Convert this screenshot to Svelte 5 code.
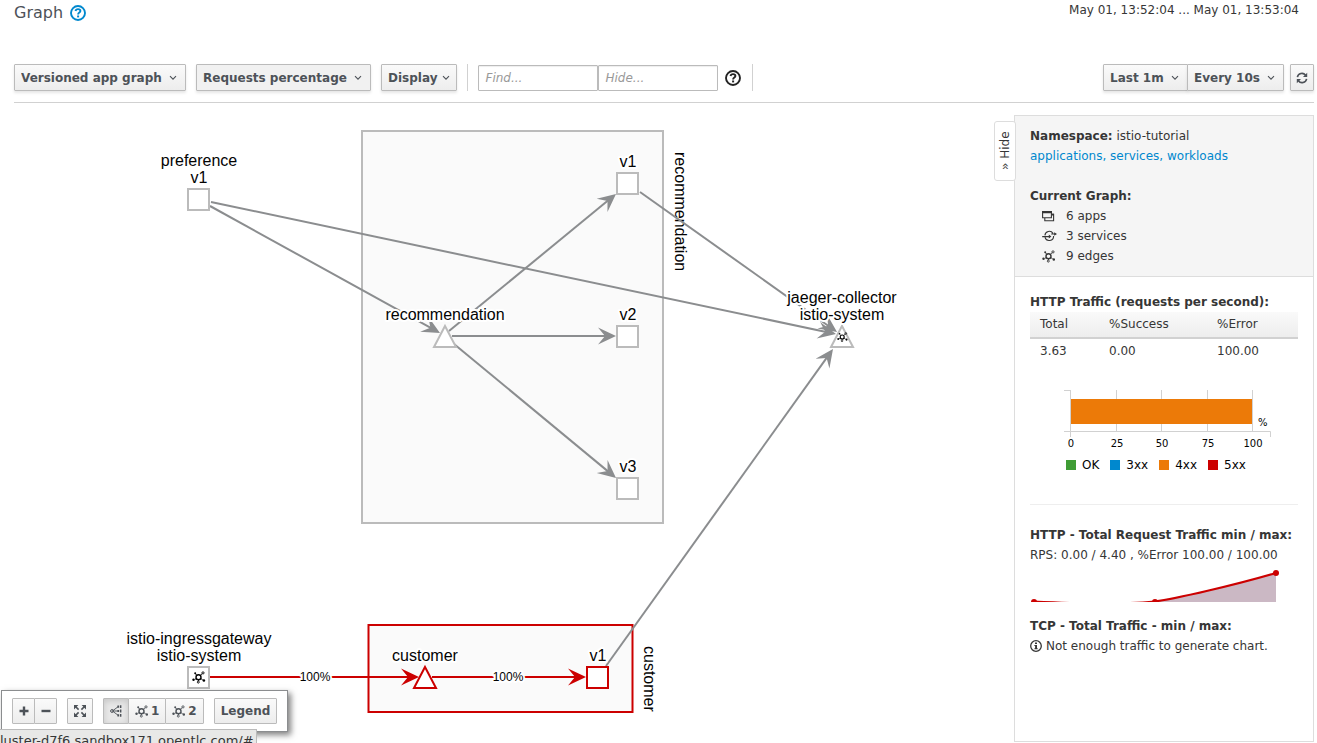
<script>
  const GREY = '#8b8d8f';
  const RED = '#cc0000';

  const edges = [
    { from: [210, 206], to: [440, 333] },
    { from: [211, 202], to: [836, 334] },
    { from: [449, 331], to: [616, 194] },
    { from: [452, 336], to: [616, 336] },
    { from: [454, 344], to: [616, 478] },
    { from: [640, 192], to: [837, 332] },
    { from: [606, 666], to: [833, 349] },
    { from: [210, 677], to: [419, 677], red: true, label: '100%', lx: 315 },
    { from: [432, 677], to: [586, 677], red: true, label: '100%', lx: 508 }
  ].map((e) => {
    const dx = e.to[0] - e.from[0];
    const dy = e.to[1] - e.from[1];
    const len = Math.hypot(dx, dy);
    return {
      ...e,
      color: e.red ? RED : GREY,
      angle: (Math.atan2(dy, dx) * 180) / Math.PI,
      end: [e.to[0] - (dx / len) * 10, e.to[1] - (dy / len) * 10]
    };
  });

  const nodes = [
    { x: 199, y: 199, lines: ['preference', 'v1'] },
    { x: 628, y: 183, lines: ['v1'] },
    { x: 628, y: 336, lines: ['v2'] },
    { x: 628, y: 488, lines: ['v3'] },
    { x: 445, y: 336, tri: true, lines: ['recommendation'] },
    { x: 842, y: 336, tri: true, hub: true, lines: ['jaeger-collector', 'istio-system'] },
    { x: 199, y: 677, hub: true, lines: ['istio-ingressgateway', 'istio-system'] },
    { x: 425, y: 677, tri: true, red: true, lines: ['customer'] },
    { x: 598, y: 677, red: true, lines: ['v1'] }
  ];

  const ticks = [0, 25, 50, 75, 100];
  const legend = [
    { name: 'OK', color: '#3f9c35' },
    { name: '3xx', color: '#0088ce' },
    { name: '4xx', color: '#ec7a08' },
    { name: '5xx', color: '#cc0000' }
  ];
</script>

{#snippet hubShape()}
  <circle cx="6.5" cy="6.2" r="2.5" fill="none" stroke="currentColor" stroke-width="1.4" />
  <path d="M8.3 4.4L10.3 2.6M4.8 4.4L3.6 2.9M4.4 7.4L2.6 8.6M8.6 7.4L10.8 9M6.5 8.7V10" stroke="currentColor" stroke-width="0.9" fill="none" />
  <circle cx="11" cy="1.9" r="1.1" fill="none" stroke="currentColor" stroke-width="0.9" />
  <circle cx="6.3" cy="11.1" r="1" fill="none" stroke="currentColor" stroke-width="0.9" />
  <circle cx="3.2" cy="2.2" r="1" fill="currentColor" />
  <circle cx="1.5" cy="8.8" r="1.2" fill="currentColor" />
  <circle cx="11.9" cy="9.5" r="1.3" fill="currentColor" />
{/snippet}

{#snippet hub()}
  <svg class="icon" width="13" height="13" viewBox="0 0 13 13" aria-hidden="true">{@render hubShape()}</svg>
{/snippet}

{#snippet caret()}
  <svg class="caret" width="8" height="6" viewBox="0 0 8 6" aria-hidden="true">
    <path d="M1 1.2L4 4.2L7 1.2" fill="none" stroke="currentColor" stroke-width="1.1" />
  </svg>
{/snippet}

{#snippet help()}
  <svg class="help" width="16" height="16" viewBox="0 0 16 16" aria-hidden="true">
    <circle cx="8" cy="8" r="7" fill="none" stroke="currentColor" stroke-width="1.9" />
    <path d="M5.5 6C5.8 4.5 6.8 4.1 8 4.1C9.5 4.1 10.4 4.9 10.4 6C10.4 7.6 8.1 7.5 8.1 9.4" fill="none" stroke="currentColor" stroke-width="1.9" />
    <rect x="7.1" y="10.5" width="2" height="1.9" fill="currentColor" />
  </svg>
{/snippet}

{#snippet picker(label, value, hovered)}
  <span class="picker">
    <select class="btn" class:hovered aria-label={label}><option>{value}</option></select>
    {@render caret()}
  </span>
{/snippet}

<div class="page">
  <header>
    <h1>Graph <a class="about" href="#help" aria-label="Help">{@render help()}</a></h1>
    <span class="range">May 01, 13:52:04 ... May 01, 13:53:04</span>
  </header>

  <div class="toolbar">
    {@render picker('Graph type', 'Versioned app graph', false)}
    {@render picker('Edge labels', 'Requests percentage', true)}
    <button class="btn display">Display {@render caret()}</button>
    <div class="search">
      <input type="text" placeholder="Find..." aria-label="Find" />
      <input type="text" placeholder="Hide..." aria-label="Hide" />
      <button class="plain" aria-label="Find and hide help">{@render help()}</button>
    </div>
    <div class="refresh">
      <div class="joined">
        {@render picker('Duration', 'Last 1m', false)}
        {@render picker('Refresh interval', 'Every 10s', false)}
      </div>
      <button class="btn reload" aria-label="Refresh">
        <svg width="12" height="12" viewBox="0 0 12 12" aria-hidden="true">
          <path d="M1.4 5.2A4.6 4.6 0 0 1 9.6 3.2M10.6 6.8A4.6 4.6 0 0 1 2.4 8.8" fill="none" stroke="currentColor" stroke-width="1.6" />
          <path d="M11.2 0.8V5H7zM0.8 11.2V7H5z" fill="currentColor" />
        </svg>
      </button>
    </div>
  </div>

  <main>
    <section class="canvas" aria-label="Service graph">
      <svg class="graph">
        <g transform="translate(0 -103)">
          <rect x="362" y="131" width="301" height="392" class="box" />
          <rect x="368.5" y="625" width="264" height="87" class="box bad" />
          <text class="vertical" transform="translate(675 152) rotate(90)">recommendation</text>
          <text class="vertical" transform="translate(644 646) rotate(90)">customer</text>
          {#each edges as e}
            <line x1={e.from[0]} y1={e.from[1]} x2={e.end[0]} y2={e.end[1]} stroke={e.color} stroke-width="2" />
            <path d="M0 0L-18 -8.5L-11 0L-18 8.5Z" fill={e.color} transform="translate({e.to[0]} {e.to[1]}) rotate({e.angle})" />
            {#if e.label}
              <text class="rate" x={e.lx} y="681">{e.label}</text>
            {/if}
          {/each}
          {#each nodes as n}
            {#if n.tri}
              <path class="node" class:bad={n.red} d="M{n.x} {n.y - 10}L{n.x + 11} {n.y + 11}H{n.x - 11}Z" />
            {:else}
              <rect class="node" class:bad={n.red} x={n.x - 11} y={n.y - 10} width="21" height="21" />
            {/if}
            {#if n.hub}
              <g class="mark" transform="translate({n.x - (n.tri ? 5 : 7)} {n.y - (n.tri ? 4 : 6)}) scale({n.tri ? 0.8 : 1})">{@render hubShape()}</g>
            {/if}
            {#each n.lines as line, i}
              <text class="label" x={n.x} y={n.y - 16 - 17 * (n.lines.length - 1 - i)}>{line}</text>
            {/each}
          {/each}
        </g>
      </svg>

      <div class="controls">
        <div class="joined">
          <button class="btn sq" aria-label="Zoom in">
            <svg width="10" height="10" viewBox="0 0 10 10" aria-hidden="true"><path d="M5 0.5V9.5M0.5 5H9.5" stroke="currentColor" stroke-width="2.4" /></svg>
          </button>
          <button class="btn sq" aria-label="Zoom out">
            <svg width="10" height="10" viewBox="0 0 10 10" aria-hidden="true"><path d="M0.5 5H9.5" stroke="currentColor" stroke-width="2.4" /></svg>
          </button>
        </div>
        <button class="btn" aria-label="Fit to screen">
          <svg width="12" height="12" viewBox="0 0 12 12" aria-hidden="true">
            <path d="M0 0H4.4L0 4.4zM12 0V4.4L7.6 0zM12 12H7.6L12 7.6zM0 12V7.6L4.4 12z" fill="currentColor" />
            <path d="M1.5 1.5L4.6 4.6M10.5 1.5L7.4 4.6M10.5 10.5L7.4 7.4M1.5 10.5L4.6 7.4" stroke="currentColor" stroke-width="1.6" />
          </svg>
        </button>
        <div class="joined">
          <button class="btn active" aria-label="Default layout">
            <svg width="12" height="12" viewBox="0 0 12 12" aria-hidden="true">
              <path d="M8 1.8L2.4 6L8 10.2M3 6H8" fill="none" stroke="currentColor" stroke-width="0.9" />
              <circle cx="2" cy="6" r="1.4" fill="none" stroke="currentColor" stroke-width="1" />
              <path d="M7.4 0.6H9.2V2.8H7.4zM10 0.2H11.4V3H10zM7.4 4.9H9.2V7.1H7.4zM10 4.6H11.4V7.4H10zM7.4 9.2H9.2V11.4H7.4zM10 9H11.4V11.8H10z" fill="currentColor" />
            </svg>
          </button>
          <button class="btn">{@render hub()} 1</button>
          <button class="btn">{@render hub()} 2</button>
        </div>
        <button class="btn">Legend</button>
      </div>
    </section>

    <aside>
      <button class="tab">&raquo; Hide</button>
      <div class="summary">
        <div><strong>Namespace:</strong> istio-tutorial</div>
        <div><a href="#applications">applications,</a> <a href="#services">services,</a> <a href="#workloads">workloads</a></div>
        <h2 class="current">Current Graph:</h2>
        <ul>
          <li>
            <svg class="icon" width="13" height="13" viewBox="0 0 13 13" aria-hidden="true">
              <path d="M0.6 1.6H9.4V7.8H0.6zM9.6 4.2H11.6V10.8H2.8V8.2" fill="none" stroke="currentColor" stroke-width="1.1" />
              <path d="M0.1 1.1H9.9V3.2H0.1zM10 3.7H12V5.4H10z" fill="currentColor" />
            </svg>
            6 apps
          </li>
          <li>
            <svg class="icon" width="15" height="13" viewBox="0 0 15 13" aria-hidden="true">
              <path d="M2.9 5.4A4.4 4.4 0 0 1 11 3.4M11.6 6A4.4 4.4 0 0 1 3 7.4M0.2 6.6H7.6M9.2 4H13" fill="none" stroke="currentColor" stroke-width="1.1" />
              <path d="M6.8 4.6L9.4 6.6L6.8 8.6zM12.2 2.2L15 4L12.2 5.8z" fill="currentColor" />
            </svg>
            3 services
          </li>
          <li>{@render hub()} 9 edges</li>
        </ul>
      </div>

      <div class="details">
        <h2>HTTP Traffic (requests per second):</h2>
        <table>
          <thead><tr><th>Total</th><th>%Success</th><th>%Error</th></tr></thead>
          <tbody><tr><td>3.63</td><td>0.00</td><td>100.00</td></tr></tbody>
        </table>

        <svg class="bars" width="268" height="74">
          <g fill="none" stroke="#d1d1d1">
            {#each ticks as t}
              <path d="M{Math.round(41 + t * 1.82) - 0.5} 9V51" />
            {/each}
            <path d="M34 9.5H40.5M34 50.5H240.5V56M40.5 50V56" />
          </g>
          <rect x="41" y="18" width="181" height="25" fill="#ec7a08" />
          {#each ticks as t}
            <text x={Math.round(41 + t * 1.82)} y="66" text-anchor="middle">{t}</text>
          {/each}
          <text x="228" y="45">%</text>
        </svg>
        <div class="keys">
          {#each legend as k}
            <span><i style:background={k.color}></i>{k.name}</span>
          {/each}
        </div>
        <hr />

        <h2>HTTP - Total Request Traffic min / max:</h2>
        <div>RPS: 0.00 / 4.40 , %Error 100.00 / 100.00</div>
        <svg class="spark" width="268" height="37">
          <path d="M4 36.5C44 38 84 40 125 36.5C145 34 205 20 246 8V37H4Z" fill="#cbb8c4" />
          <path d="M4 36.5C44 38 84 40 125 36.5C145 34 205 20 246 8" fill="none" stroke="#cc0000" stroke-width="2" />
          <circle cx="4" cy="37" r="3" fill="#cc0000" />
          <circle cx="125" cy="37" r="3" fill="#cc0000" />
          <circle cx="246" cy="8" r="3" fill="#cc0000" />
        </svg>
        <h2 class="tcp">TCP - Total Traffic - min / max:</h2>
        <div class="note">
          <svg width="12" height="12" viewBox="0 0 12 12" aria-hidden="true">
            <circle cx="6" cy="6" r="5.3" fill="none" stroke="currentColor" stroke-width="1.3" />
            <path d="M5 2.6H7V4H5zM4.4 5H7V8.2H7.7V9.3H4.4V8.2H5.1V6H4.4z" fill="currentColor" />
          </svg>
          Not enough traffic to generate chart.
        </div>
      </div>
    </aside>
  </main>

  <div class="status"><span>luster-d7f6.sandbox171.opentlc.com/#</span></div>
</div>

<style>
  :global(body) {
    background: #fff;
  }
  .page {
    display: flex;
    flex-direction: column;
    box-sizing: border-box;
    min-height: 100vh;
    position: relative;
    overflow: hidden;
    font: 12px/20px 'DejaVu Sans', sans-serif;
    color: #363636;
  }
  header {
    display: flex;
    justify-content: space-between;
    height: 64px;
    padding: 0 18px 0 14px;
  }
  h1 {
    display: flex;
    gap: 7px;
    align-items: center;
    height: 26px;
    margin: 0;
    font-size: 16px;
    font-weight: 400;
    color: #4d5258;
  }
  .about {
    display: flex;
    color: #0088ce;
  }
  svg {
    flex: none;
  }
  .toolbar {
    display: flex;
    flex-wrap: wrap;
    gap: 10px;
    margin: 0 3px 0 14px;
    padding-bottom: 11px;
    border-bottom: 1px solid #d1d1d1;
  }
  .btn {
    display: inline-flex;
    align-items: center;
    justify-content: center;
    box-sizing: border-box;
    height: 27px;
    margin: 0;
    padding: 2px 6px;
    border: 1px solid #bbb;
    border-radius: 1px;
    background: linear-gradient(#fafafa, #ededed);
    box-shadow: 0 2px 3px rgba(3, 3, 3, 0.1);
    color: #4d5258;
    font: 700 12px/20px 'DejaVu Sans', sans-serif;
  }
  .picker {
    position: relative;
    display: inline-flex;
  }
  .picker select {
    appearance: none;
    padding-right: 23px;
  }
  .picker .caret {
    position: absolute;
    right: 9px;
    top: 11px;
    color: #4d5258;
    pointer-events: none;
  }
  .btn.hovered {
    background: #f1f1f1;
  }
  .display {
    gap: 5px;
  }
  .search {
    display: flex;
    align-items: center;
    padding: 0 11px 0 10px;
    border: solid #d1d1d1;
    border-width: 0 1px;
  }
  .search input {
    box-sizing: border-box;
    width: 120px;
    height: 26px;
    padding: 2px 6px;
    border: 1px solid #bbb;
    border-radius: 1px;
    box-shadow: inset 0 1px 1px rgba(3, 3, 3, 0.07);
    font: 12px/20px 'DejaVu Sans', sans-serif;
  }
  .search input::placeholder {
    font-style: italic;
    color: #999;
  }
  .plain {
    display: flex;
    margin: 0 0 0 7px;
    padding: 0;
    border: 0;
    background: none;
    color: #222;
  }
  .refresh {
    display: flex;
    gap: 6px;
    margin-left: auto;
  }
  .reload {
    padding: 2px 5px;
  }
  .refresh .picker + .picker,
  .controls .joined .btn + .btn {
    margin-left: -1px;
  }
  .joined {
    display: flex;
  }
  main {
    display: flex;
    flex: 1;
    padding-right: 3px;
  }
  .canvas {
    position: relative;
    flex: 1;
    min-width: 0;
  }
  .graph {
    display: block;
    width: 100%;
    height: 100%;
    font: 16px 'Liberation Sans', Arial, sans-serif;
    position: absolute;
  }
  .box {
    fill: #fafafa;
    stroke: #bbb;
    stroke-width: 2;
  }
  .node {
    fill: #fff;
    stroke: #bbb;
    stroke-width: 2;
  }
  .bad {
    stroke: #cc0000;
  }
  .mark {
    color: #030303;
  }
  .label,
  .rate {
    text-anchor: middle;
    fill: #030303;
    stroke: #fff;
    stroke-width: 4px;
    stroke-linejoin: round;
    paint-order: stroke;
  }
  .rate {
    font-size: 12px;
  }
  .vertical {
    fill: #030303;
  }
  .controls {
    position: absolute;
    left: 1px;
    bottom: 11px;
    display: flex;
    gap: 10px;
    padding: 7px 10px;
    border: 1px solid #8b8d8f;
    background: #fff;
    box-shadow: 3px 3px 6px rgba(3, 3, 3, 0.5);
  }
  .controls .btn {
    gap: 3px;
    height: 26px;
    box-shadow: none;
  }
  .controls .sq {
    width: 23px;
  }
  .controls .active {
    background: #e8e8e8;
    box-shadow: inset 0 2px 6px rgba(3, 3, 3, 0.15);
  }
  aside {
    position: relative;
    box-sizing: border-box;
    width: 300px;
    margin: 12px 0 1px;
    border: 1px solid #ddd;
    background: #fff;
  }
  .tab {
    position: absolute;
    right: 297px;
    top: 5px;
    box-sizing: border-box;
    width: 22px;
    height: 60px;
    padding: 0;
    border: 1px solid #ddd;
    border-radius: 3px;
    background: #fff;
    color: #363636;
    font: 12px/18px 'DejaVu Sans', sans-serif;
    writing-mode: vertical-rl;
    transform: rotate(180deg);
  }
  .summary {
    padding: 10px 15px;
    border-bottom: 1px solid #ddd;
    background: #f5f5f5;
  }
  a {
    color: #0088ce;
    text-decoration: none;
  }
  h2 {
    margin: 0;
    font-size: 12px;
    line-height: 20px;
    white-space: nowrap;
  }
  .current {
    margin-top: 20px;
  }
  ul {
    margin: 0;
    padding: 0 0 0 12px;
    list-style: none;
  }
  li {
    display: grid;
    grid-template-columns: 24px 1fr;
    align-items: center;
    white-space: nowrap;
  }
  .details {
    padding: 15px;
  }
  table {
    width: 100%;
    border-collapse: collapse;
    table-layout: fixed;
    text-align: left;
  }
  th {
    padding: 2px 10px 3px;
    border-bottom: 2px solid #d1d1d1;
    background: linear-gradient(#fafafa, #ededed);
    font-weight: 400;
  }
  th:first-child {
    width: 49px;
  }
  th:nth-child(2) {
    width: 88px;
  }
  td {
    padding: 2px 10px;
  }
  .bars {
    display: block;
    margin-top: 18px;
    font-size: 10px;
  }
  .bars text {
    fill: #030303;
  }
  .keys {
    display: flex;
    gap: 11px;
    padding-left: 36px;
    color: #030303;
  }
  .keys span {
    display: flex;
    align-items: center;
    gap: 6px;
  }
  .keys i {
    width: 10px;
    height: 10px;
  }
  hr {
    margin: 29px 0 20px;
    border: 0;
    border-top: 1px solid #eee;
  }
  .spark {
    display: block;
  }
  .tcp {
    margin-top: 14px;
  }
  .note {
    display: flex;
    align-items: center;
    gap: 4px;
  }
  .status {
    position: absolute;
    left: 0;
    bottom: 0;
    box-sizing: border-box;
    height: 14px;
    padding: 1px 2px 0 0;
    border: solid #bbb;
    border-width: 1px 1px 0 0;
    background: #e8e8e7;
    font-size: 13px;
    overflow: hidden;
  }
</style>
